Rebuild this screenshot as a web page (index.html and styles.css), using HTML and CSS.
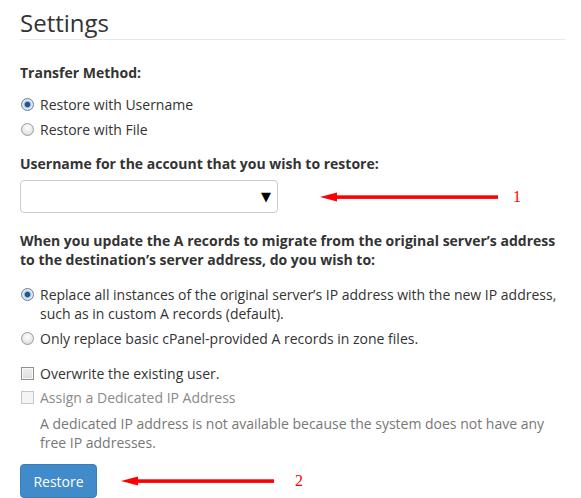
FILE: index.html
```html
<!DOCTYPE html>
<html>
<head>
<meta charset="utf-8">
<link rel="stylesheet" href="styles.css">
</head>
<body>
<div class="page">
  <h2 class="title">Settings</h2>

  <div class="label label-first">Transfer Method:</div>
  <div class="options">
    <label class="opt"><span class="radio checked"></span><span>Restore with Username</span></label>
    <label class="opt"><span class="radio"></span><span>Restore with File</span></label>
  </div>

  <div class="label label-user">Username for the account that you wish to restore:</div>
  <div class="select-row">
    <div class="select"><span class="caret">&#9660;</span></div>
    <div class="annot">
      <svg class="arrow" width="178" height="12" viewBox="0 0 178 12">
        <polygon points="0,6 17,1.5 17,10.5" fill="#f00"/>
        <rect x="15" y="4.3" width="163" height="3.6" fill="#f00"/>
      </svg>
      <span class="num">1</span>
    </div>
  </div>

  <div class="label label-para">When you update the A records to migrate from the original server’s address to the destination’s server address, do you wish to:</div>
  <div class="options options-a">
    <label class="opt"><span class="radio checked"></span><span>Replace all instances of the original server’s IP address with the new IP address, such as in custom A records (default).</span></label>
    <label class="opt"><span class="radio"></span><span>Only replace basic cPanel-provided A records in zone files.</span></label>
  </div>

  <div class="options options-c">
    <label class="opt"><span class="check"></span><span>Overwrite the existing user.</span></label>
    <label class="opt disabled"><span class="check"></span><span>Assign a Dedicated IP Address</span></label>
    <p class="help">A dedicated IP address is not available because the system does not have any free IP addresses.</p>
  </div>

  <div class="btn-row">
    <button class="btn">Restore</button>
    <div class="annot annot2">
      <svg class="arrow" width="153" height="12" viewBox="0 0 153 12">
        <polygon points="0,6 17,1.5 17,10.5" fill="#f00"/>
        <rect x="15" y="4.3" width="138" height="3.6" fill="#f00"/>
      </svg>
      <span class="num">2</span>
    </div>
  </div>
</div>
</body>
</html>
```

FILE: styles.css
```css
html, body {
  margin: 0;
  padding: 0;
  background: #fff;
}
body {
  font-family: "Open Sans", "Liberation Sans", sans-serif;
  font-size: 14px;
  line-height: 19px;
  color: #333;
}
.page {
  padding: 0 16px 0 20px;
}
.title {
  margin: 0;
  padding: 10px 0 3px;
  font-size: 24px;
  font-weight: 400;
  line-height: 26px;
  color: #333;
  border-bottom: 1px solid #e8e8e8;
}
.label {
  font-weight: 700;
  line-height: 19px;
}
.label-first { margin-top: 23px; }
.label-user { margin-top: 15px; }
.label-para { margin-top: 18px; width: 545px; }
.options {
  display: flex;
  flex-direction: column;
  gap: 6px;
  margin-top: 13px;
}
.options-a { margin-top: 16px; gap: 6px; }
.options-c { margin-top: 16px; gap: 5px; }
.opt {
  display: flex;
  align-items: flex-start;
  gap: 6px;
}
.opt.disabled { color: #8a8a8a; }
.radio {
  flex: none;
  width: 11px;
  height: 11px;
  margin: 3px 0 0 1px;
  border-radius: 50%;
  border: 1px solid #9a9a9a;
  background: radial-gradient(circle at 50% 35%, #fff 0%, #e6e6e6 60%, #cfcfcf 100%);
  box-sizing: content-box;
}
.radio.checked {
  border-color: #6e7f91;
  background: radial-gradient(circle, #1b5fa8 0, #174f8f 28%, #8aa8c8 36%, #e6ebf1 55%, #ccd4de 100%);
}
.check {
  flex: none;
  width: 11px;
  height: 11px;
  margin: 3px 0 0 1px;
  border: 1px solid #8f8f8f;
  background: linear-gradient(#eee, #dcdcdc);
  box-shadow: inset 0 0 0 1px #f8f8f8;
}
.opt.disabled .check {
  border-color: #c6c6c6;
  background: #f4f4f4;
  box-shadow: none;
}
.help {
  margin: 2px 0 0;
  padding-left: 20px;
  color: #777;
  width: 510px;
}
.select-row {
  display: flex;
  align-items: center;
  margin-top: 7px;
}
.select {
  width: 250px;
  height: 31px;
  border: 1px solid #ccc;
  border-radius: 4px;
  display: flex;
  align-items: center;
  justify-content: flex-end;
  padding-right: 6px;
  box-sizing: content-box;
}
.caret {
  font-size: 13px;
  color: #000;
  font-family: "DejaVu Sans", sans-serif;
  line-height: 1;
}
.annot {
  display: flex;
  align-items: center;
  margin-left: 42px;
}
.arrow { display: block; }
.num {
  font-family: "Liberation Serif", serif;
  font-size: 16px;
  color: #f00;
  margin-left: 15px;
  line-height: 1;
}
.btn-row {
  display: flex;
  align-items: center;
  margin-top: 12px;
}
.btn {
  font-family: "Open Sans", "Liberation Sans", sans-serif;
  font-size: 14px;
  color: #fff;
  background: #428bca;
  border: 1px solid #357ebd;
  border-radius: 4px;
  height: 34px;
  width: 77px;
  padding: 0;
}
.annot2 { margin-left: 24px; }
.annot2 .num { margin-left: 21px; }
```
